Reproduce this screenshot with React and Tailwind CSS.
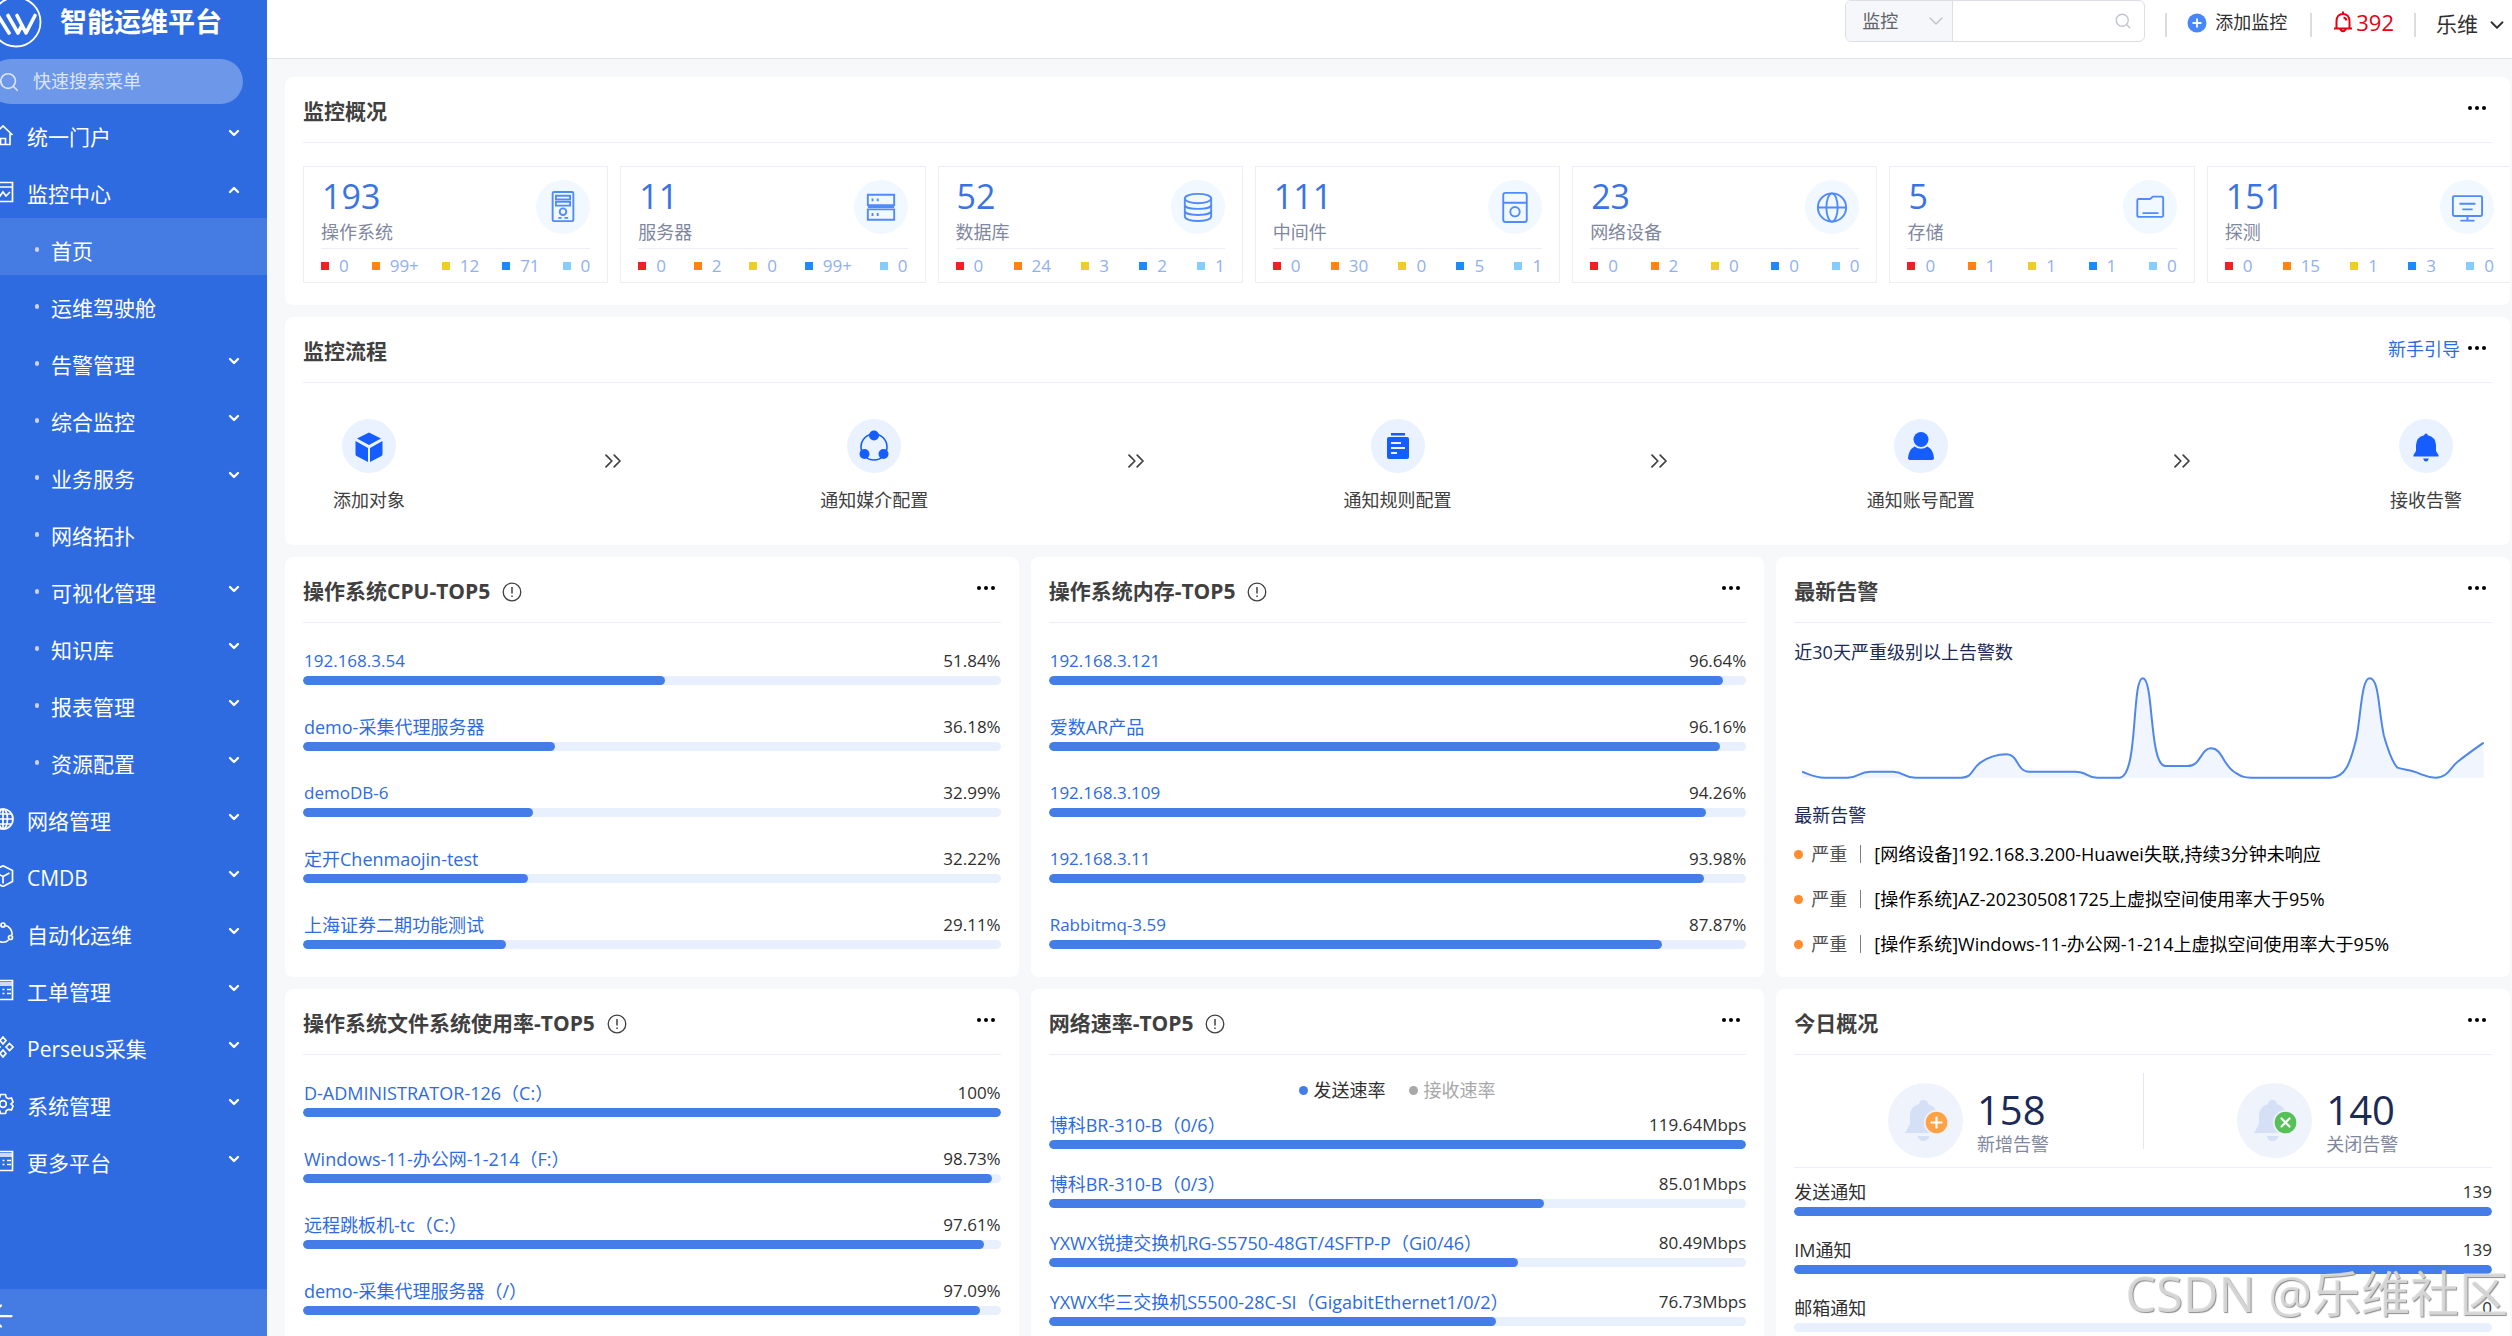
import { useState } from "react";
import { ChevronDown, ChevronUp, ChevronsRight, ArrowLeft, Search } from "lucide-react";

const MENU = [
  { label: "统一门户", icon: "home" },
  {
    label: "监控中心",
    icon: "monitor",
    children: [
      { label: "首页" },
      { label: "运维驾驶舱" },
      { label: "告警管理", more: true },
      { label: "综合监控", more: true },
      { label: "业务服务", more: true },
      { label: "网络拓扑" },
      { label: "可视化管理", more: true },
      { label: "知识库", more: true },
      { label: "报表管理", more: true },
      { label: "资源配置", more: true },
    ],
  },
  { label: "网络管理", icon: "globe" },
  { label: "CMDB", icon: "cube" },
  { label: "自动化运维", icon: "cycle" },
  { label: "工单管理", icon: "list" },
  { label: "Perseus采集", icon: "diamonds" },
  { label: "系统管理", icon: "gear" },
  { label: "更多平台", icon: "list" },
];

const STATS = [
  { value: 193, label: "操作系统", icon: "tower", levels: ["0", "99+", "12", "71", "0"] },
  { value: 11, label: "服务器", icon: "server", levels: ["0", "2", "0", "99+", "0"] },
  { value: 52, label: "数据库", icon: "database", levels: ["0", "24", "3", "2", "1"] },
  { value: 111, label: "中间件", icon: "middleware", levels: ["0", "30", "0", "5", "1"] },
  { value: 23, label: "网络设备", icon: "network", levels: ["0", "2", "0", "0", "0"] },
  { value: 5, label: "存储", icon: "folder", levels: ["0", "1", "1", "1", "0"] },
  { value: 151, label: "探测", icon: "probe", levels: ["0", "15", "1", "3", "0"] },
];

const LEVEL_COLORS = ["bg-[#f01f24]", "bg-[#ff8412]", "bg-[#edcc2c]", "bg-[#1f8af5]", "bg-[#85cdfd]"];

const STEPS = [
  { label: "添加对象", icon: "box" },
  { label: "通知媒介配置", icon: "share" },
  { label: "通知规则配置", icon: "rules" },
  { label: "通知账号配置", icon: "user" },
  { label: "接收告警", icon: "bell" },
];

const CPU = [
  ["192.168.3.54", 51.84],
  ["demo-采集代理服务器", 36.18],
  ["demoDB-6", 32.99],
  ["定开Chenmaojin-test", 32.22],
  ["上海证券二期功能测试", 29.11],
];

const MEMORY = [
  ["192.168.3.121", 96.64],
  ["爱数AR产品", 96.16],
  ["192.168.3.109", 94.26],
  ["192.168.3.11", 93.98],
  ["Rabbitmq-3.59", 87.87],
];

const DISKS = [
  ["D-ADMINISTRATOR-126（C:）", 100],
  ["Windows-11-办公网-1-214（F:）", 98.73],
  ["远程跳板机-tc（C:）", 97.61],
  ["demo-采集代理服务器（/）", 97.09],
];

const RATES = [
  ["博科BR-310-B（0/6）", 119.64],
  ["博科BR-310-B（0/3）", 85.01],
  ["YXWX锐捷交换机RG-S5750-48GT/4SFTP-P（Gi0/46）", 80.49],
  ["YXWX华三交换机S5500-28C-SI（GigabitEthernet1/0/2）", 76.73],
];

const ALERTS = [
  "[网络设备]192.168.3.200-Huawei失联,持续3分钟未响应",
  "[操作系统]AZ-202305081725上虚拟空间使用率大于95%",
  "[操作系统]Windows-11-办公网-1-214上虚拟空间使用率大于95%",
];

const NOTICES = [
  ["发送通知", 139],
  ["IM通知", 139],
  ["邮箱通知", 0],
];

const MENU_ICONS = {
  home: <path d="M1.5 11 11 2l9.500 9M4 9.500V20.500h14V9.500M8.500 20.500v-6h5v6" />,
  monitor: <path d="M1.500 1.500h19v19h-19zM1.500 6h19M5 12l3 3 3-4 3 4 4-4" />,
  globe: (
    <>
      <circle cx="11" cy="11" r="10" />
      <ellipse cx="11" cy="11" rx="4.500" ry="10" />
      <path d="M1 11h20M2.500 6h17M2.500 16h17M11 1v20" />
    </>
  ),
  cube: <path d="M11 .8 20.500 5.500v11L11 21.500 1.500 16.500v-11zM4.500 8 11 11.500 17.500 8M11 11.500v7" />,
  cycle: (
    <>
      <circle cx="11" cy="3" r="2" />
      <circle cx="18.500" cy="15.500" r="2" />
      <circle cx="3.500" cy="15.500" r="2" />
      <path d="M13.500 3.500c4 1 7 5 6.500 9.500M16.500 18c-3 3-8 3-11 0M8.500 3.500c-4 1-7 5-6.500 9.500" />
    </>
  ),
  list: <path d="M2 1.500h18.500v19H2zM2 4h18M2 6h18M6 10.500h2M6 14.500h2M10.500 10.500h2M10.500 14.500h2M15 10.500h4M15 14.500h4" />,
  diamonds: <path d="m11 1 3 3.500-3 3.500-3-3.500zM11 14l3 3.500-3 3.500-3-3.500zM4.500 7.500l3.500 3.500-3.500 3.500L1 11zM17.500 7.500 21 11l-3.500 3.500L14 11z" />,
  gear: (
    <>
      <circle cx="11" cy="11" r="3.300" />
      <path d="M8.500 1.500h5l.8 3 2.200 1.200 3-.7 1.500 4-2 2 2 2-1.500 4-3-.7-2.200 1.200-.8 3h-5l-.8-3-2.200-1.200-3 .7-1.500-4 2-2-2-2 1.500-4 3 .7 2.200-1.200z" />
    </>
  ),
};

const STAT_ICONS = {
  tower: (
    <>
      <rect x="6" y="1" width="22" height="31" rx="1.500" />
      <path d="M9.500 5h15v4h-15zM9.500 11.500h15v4h-15zM12 28.500h3.500M18.500 28.500h4" />
      <circle cx="17" cy="22" r="3.500" />
    </>
  ),
  server: <path d="M3 4h28v11H3zM3 19.500h28v11H3zM8 8v3M13.500 8v3M8 23.500v3M13.500 23.500v3M3 17h28" />,
  database: (
    <>
      <ellipse cx="17" cy="8" rx="14" ry="5" />
      <path d="M3 8v19c0 6.500 28 6.500 28 0V8M3 14.500c0 6 28 6 28 0M3 21c0 6 28 6 28 0" />
    </>
  ),
  middleware: (
    <>
      <rect x="4.500" y="2" width="25" height="31" rx="2.500" />
      <path d="M4.500 12.500h25" />
      <circle cx="17" cy="22" r="5" />
    </>
  ),
  network: (
    <>
      <circle cx="17" cy="17.500" r="15" />
      <ellipse cx="17" cy="17.500" rx="6" ry="15" />
      <path d="M2 17.500h30" />
    </>
  ),
  folder: <path d="M3.500 10q0-1.500 1.500-1.500h12L20 6h9.500q1.500 0 1.500 1.500v18.500q0 1.500-1.500 1.500h-24q-2 0-2-1.500zM9 23.500h17" />,
  probe: (
    <>
      <rect x="2" y="5.500" width="31" height="21" rx="1.500" />
      <path d="M9 13.500h17M12 19.500h11M17.500 26.500v5M10 31.500h15" />
    </>
  ),
};

const STEP_ICONS = {
  box: <path d="M16 2.500 28 8.500 16 15 4 8.500zM2.500 11 15 18v14L3.500 26q-1-.5-1-2zM29.500 11 17 18v14l11.500-6q1-.5 1-2z" />,
  share: (
    <>
      <circle cx="16" cy="5.500" r="5" />
      <circle cx="6.500" cy="24" r="5" />
      <circle cx="25.500" cy="24" r="5" />
      <circle cx="16" cy="17" r="13" fill="none" stroke="currentColor" strokeWidth="1.600" />
    </>
  ),
  rules: (
    <>
      <rect x="9" y="3" width="14" height="2.500" />
      <rect x="5" y="7" width="22" height="22" rx="2" />
      <path d="M9 13h10M9 18h14M9 23h6" stroke="#eaf2ff" strokeWidth="2" />
    </>
  ),
  user: (
    <>
      <circle cx="16" cy="9.500" r="7.500" />
      <path d="M9.500 16.500q6.500 4.500 13 0Q28.500 20 29 28q0 2-3 2H6q-3 0-3-2 .5-8 6.500-11.500z" />
    </>
  ),
  bell: <path d="M16 3.500q1.500 0 1.800 1.800Q25.500 7 26 15v6l2.500 4v1.500h-25V25L6 21v-6q.5-8 8.200-9.700Q14.500 3.500 16 3.500zM13 28.500h6q-1 3-3 3t-3-3z" />,
};

const Dots = () => (
  <button aria-label="更多" className="flex h-5 cursor-pointer items-center gap-[3px] text-black">
    <span className="size-1 rounded-full bg-current" />
    <span className="size-1 rounded-full bg-current" />
    <span className="size-1 rounded-full bg-current" />
  </button>
);

const Card = ({ title, info, extra, className = "", children }) => (
  <section className={`overflow-hidden rounded-lg bg-white px-[18px] ${className}`}>
    <header className="flex h-[66px] items-center justify-between border-b border-[#ebedf7] pr-1.5">
      <h2 className="flex items-center pt-1 text-[21px] font-bold text-[#404040]">
        {title}
        {info && (
          <svg viewBox="0 0 20 20" className="ml-3 size-5" fill="none" stroke="currentColor">
            <circle cx="10" cy="10" r="8.800" strokeWidth="1.300" />
            <path d="M10 5v6.500M10 13.500V15" strokeWidth="1.500" />
          </svg>
        )}
      </h2>
      <div className="flex items-center gap-2 pb-1">
        {extra}
        <Dots />
      </div>
    </header>
    {children}
  </section>
);

// plain latin names look too wide next to the mixed ones at the same size
const nameSize = (name) => (/[^\x00-\x7f]/.test(name) ? "text-[18px]" : "text-[17px]");

const BarRow = ({ name, value, percent, link = true }) => (
  <li className="flex flex-col gap-[3px]">
    <div className="flex h-6 items-center justify-between text-[17px] whitespace-nowrap text-[#303030]">
      {link ? (
        <a href="#" className={`h-6 overflow-hidden pl-px leading-6 text-[#2e6be0] ${nameSize(name)}`}>
          {name}
        </a>
      ) : (
        <span className="text-[18px]">{name}</span>
      )}
      <span>{value}</span>
    </div>
    <div className="h-[9px] overflow-hidden rounded-full bg-[#e9f0fd]">
      <div className="h-full rounded-full bg-[#447de8]" style={{ width: `${percent}%` }} />
    </div>
  </li>
);

const TopCard = ({ title, rows }) => (
  <Card title={title} info className="h-[420px]">
    <ul className="flex flex-col gap-[30px] pt-[26px]">
      {rows.map(([name, value]) => (
        <BarRow key={name} name={name} value={`${value}%`} percent={value} />
      ))}
    </ul>
  </Card>
);

const Sidebar = () => {
  const [active, setActive] = useState("首页");

  return (
    <aside className="flex w-[267px] shrink-0 flex-col overflow-hidden bg-[#2e6be0] text-white">
      <div className="flex h-[59px] items-start gap-[18px]">
        <svg viewBox="0 0 52 52" className="-mt-1 -ml-2.5 size-[52px] shrink-0" fill="none" stroke="currentColor">
          <circle cx="26" cy="26" r="24.500" strokeWidth="1.800" />
          <path
            d="M8 19.500 19 37M18 19.500 28 37l3-6M27 19.500 36 37l9-17.500"
            strokeWidth="3.600"
            strokeLinecap="round"
            strokeLinejoin="round"
          />
        </svg>
        <h1 className="text-[27px] leading-[44px] font-bold">智能运维平台</h1>
      </div>

      <label className="mr-6 -ml-3 flex h-[45px] shrink-0 items-center rounded-full bg-white/30 pl-3 text-[#dbe6fb]">
        <Search className="-ml-0.5 size-[22px]" strokeWidth={1.8} />
        <input
          aria-label="快速搜索菜单"
          placeholder="快速搜索菜单"
          className="ml-[13px] w-0 grow bg-transparent text-[18px] outline-none placeholder:text-[#dbe6fb]"
        />
      </label>

      <nav className="grow">
        <ul>
          {MENU.map((item) => (
            <li key={item.label}>
              <button className="flex h-[57px] w-full cursor-pointer items-center pr-[25px]">
                <svg
                  viewBox="0 0 22 22"
                  className="mt-1 -ml-2 size-[22px] shrink-0"
                  fill="none"
                  stroke="currentColor"
                  strokeWidth="1.700"
                >
                  {MENU_ICONS[item.icon]}
                </svg>
                <span className="grow pt-2.5 pl-[13px] text-left text-[21px]">{item.label}</span>
                {item.children ? (
                  <ChevronUp className="size-4" strokeWidth={3.5} />
                ) : (
                  <ChevronDown className="size-4" strokeWidth={3.5} />
                )}
              </button>
              {item.children && (
                <ul>
                  {item.children.map((child) => (
                    <li key={child.label}>
                      <button
                        onClick={() => setActive(child.label)}
                        className={`flex h-[57px] w-full cursor-pointer items-center pr-[25px] pl-[35px] ${
                          active === child.label ? "bg-[#447ce4]" : ""
                        }`}
                      >
                        <span className="mt-1.5 h-[5px] w-1 rounded-full bg-[#cdd3e2]" />
                        <span className="grow pt-2.5 pl-3 text-left text-[21px]">{child.label}</span>
                        {child.more && <ChevronDown className="size-4" strokeWidth={3.5} />}
                      </button>
                    </li>
                  ))}
                </ul>
              )}
            </li>
          ))}
        </ul>
      </nav>

      <button aria-label="收起菜单" className="flex h-[47px] shrink-0 cursor-pointer items-center bg-[#447ce4] pt-1.5">
        <ArrowLeft className="-ml-[17px] size-9" strokeWidth={1.5} />
      </button>
    </aside>
  );
};

const Divider = () => <span className="h-6 w-0.5 bg-[#dcdcdc]" />;

const TopBar = () => (
  <header className="flex h-[59px] shrink-0 items-start justify-end border-b border-[#e3e5e9] bg-white pr-1 text-[18px] text-[#303030]">
    <div className="flex h-[42px] w-[300px] overflow-hidden rounded-md border border-[#dcdfe6]">
      <div className="relative w-[107px] border-r border-[#dcdfe6] bg-[#f5f7fa]">
        <select aria-label="搜索范围" className="h-full w-full appearance-none pl-4 text-[18px] text-[#606266] outline-none">
          <option>监控</option>
        </select>
        <ChevronDown className="pointer-events-none absolute top-2 right-1 size-6 text-[#c0c4cc]" strokeWidth={1.5} />
      </div>
      <label className="flex grow items-center pr-3">
        <input aria-label="搜索关键字" className="w-0 grow px-3 outline-none" />
        <Search className="size-[18px] text-[#c0c4cc]" strokeWidth={1.8} />
      </label>
    </div>
    <div className="ml-5 flex h-[49px] items-center">
      <Divider />
      <button className="ml-5 flex cursor-pointer items-center gap-2 pb-1">
        <svg viewBox="0 0 20 20" className="size-5">
          <circle cx="10" cy="10" r="9.500" fill="#4787fb" />
          <path d="M10 5.500v9M5.500 10h9" stroke="#fff" strokeWidth="1.800" />
        </svg>
        添加监控
      </button>
      <span className="w-[23px]" />
      <Divider />
      <button className="mx-5 flex cursor-pointer items-center gap-0.5 pb-1 text-[22px] text-[#e60012]">
        <svg viewBox="0 0 20 22" className="mb-0.5 size-[22px]" fill="none" stroke="currentColor" strokeWidth="2">
          <path d="M1 17.500h18M3.500 17V10c0-4 2.500-7 6.500-7s6.500 3 6.500 7v7M10 .5V3M7 18q3 4.500 6 0M10.500 6.500q2.500.5 3 3" />
        </svg>
        392
      </button>
      <Divider />
      <button className="ml-5 flex cursor-pointer items-center gap-2 text-[21px]">
        乐维
        <ChevronDown className="size-[22px]" strokeWidth={2} />
      </button>
    </div>
  </header>
);

const StatCard = ({ value, label, icon, levels }) => (
  <div className="h-[117px] flex-1 border border-[#ebedf7] px-[17px]">
    <div className="flex h-[82px] items-start justify-between border-b border-[#ebedf7] pt-[13px]">
      <div>
        <p className="pl-px text-[34px] leading-8 text-[#3a74e4]">{value}</p>
        <p className="pt-2 text-[18px] leading-6 text-[#8087a0]">{label}</p>
      </div>
      <span className="flex size-[54px] items-center justify-center rounded-full bg-[#f2f8ff] text-[#4f8aff]">
        <svg viewBox="0 0 34 34" className="size-8" fill="none" stroke="currentColor" strokeWidth="2">
          {STAT_ICONS[icon]}
        </svg>
      </span>
    </div>
    <ul className="flex h-[33px] items-center justify-between text-[17px] text-[#8fb0f2]">
      {levels.map((count, i) => (
        <li key={i} className="flex items-center gap-2.5">
          <span className={`size-2 ${LEVEL_COLORS[i]}`} />
          {count}
        </li>
      ))}
    </ul>
  </div>
);

const AlertCount = ({ value, label, color, mark }) => (
  <div className="flex flex-1 items-center justify-center gap-3.5 pt-[18px]">
    <svg viewBox="0 0 75 75" className="size-[75px]">
      <circle cx="37.500" cy="37.500" r="37.500" fill="#eff3fb" />
      <path
        d="M35.500 17q4 0 4.500 4Q49 23.500 49 33v8l4 9H17l5-9v-8q0-9.500 9-12 .5-4 4.500-4zM29.500 53h12q-1.500 5-6 5t-6-5z"
        fill="#d5e0f6"
      />
      <circle cx="48.500" cy="39.500" r="12.500" fill="#eff3fb" />
      <circle cx="48.500" cy="39.500" r="10.800" fill={color} />
      <path d={mark} stroke="#fff" strokeWidth="2.200" strokeLinecap="round" />
    </svg>
    <div className="pt-1">
      <p className="text-[40px] leading-[44px] text-[#1b2a56]">{value}</p>
      <p className="text-[18px] leading-6 text-[#8087a0]">{label}</p>
    </div>
  </div>
);

const CURVE =
  "M88 667C105 676 115 685 135 685H183C207 685 207 667 230 667H278C300 667 300 685 325 685H420C445 685 440 660 460 640C480 620 495 615 515 615C540 615 535 667 562 667H657C685 667 680 685 704 685H750C790 685 775 387 799 387C822 387 812 650 846 650H893C920 650 920 597 941 597C965 597 965 645 990 668C1005 681 1008 685 1025 685H1190C1222 685 1232 640 1244 570C1254 500 1255 387 1272 387C1292 387 1290 480 1302 560C1312 610 1320 640 1330 655C1345 662 1360 662 1375 672C1390 680 1395 685 1410 685C1435 685 1440 655 1455 638C1475 615 1490 600 1510 580";

const TrendChart = () => (
  <svg viewBox="88 383 1422 306" preserveAspectRatio="none" className="h-[102px] w-full">
    <path d={`${CURVE}V685H88Z`} fill="#f0f5fe" />
    <path d={CURVE} fill="none" stroke="#5087ea" strokeWidth="2" vectorEffect="non-scaling-stroke" />
  </svg>
);

export default function App() {
  return (
    <div className="relative flex h-screen overflow-hidden bg-[#f7f8fa] font-['Open_Sans','Noto_Sans_CJK_SC',sans-serif]">
      <Sidebar />
      <div className="flex min-w-0 grow flex-col">
        <TopBar />
        <main className="flex min-h-0 grow flex-col gap-3 overflow-hidden pt-[18px] pr-0.5 pl-[18px]">
          <Card title="监控概况" className="shrink-0">
            <div className="-mr-5 flex gap-3 pt-[23px] pb-[22px]">
              {STATS.map((stat) => (
                <StatCard key={stat.label} {...stat} />
              ))}
            </div>
          </Card>

          <Card
            title="监控流程"
            className="shrink-0"
            extra={
              <a href="#" className="pt-1 text-[18px] text-[#2e6be0]">
                新手引导
              </a>
            }
          >
            <ol className="flex items-start justify-between px-[30px] pt-9 pb-[31px]">
              {STEPS.map((step, i) => (
                <li key={step.label} className="contents">
                  {i > 0 && <ChevronsRight className="-mx-1.5 mt-7 size-7 text-[#404040]" strokeWidth={1.5} />}
                  <div className="flex flex-col items-center gap-[13px] text-[18px] text-[#404040]">
                    <span className="flex size-[54px] items-center justify-center rounded-full bg-[#eaf2ff] text-[#165dff]">
                      <svg viewBox="0 0 32 32" className="size-8" fill="currentColor">
                        {STEP_ICONS[step.icon]}
                      </svg>
                    </span>
                    <span className="leading-7">{step.label}</span>
                  </div>
                </li>
              ))}
            </ol>
          </Card>

          <div className="grid shrink-0 grid-cols-3 gap-3">
            <TopCard title="操作系统CPU-TOP5" rows={CPU} />
            <TopCard title="操作系统内存-TOP5" rows={MEMORY} />

            <Card title="最新告警" className="h-[420px]">
              <h3 className="pt-[17px] text-[18px] leading-6 text-[#1b2a56]">近30天严重级别以上告警数</h3>
              <div className="px-2 pt-[13px]">
                <TrendChart />
              </div>
              <h3 className="pt-6 text-[18px] leading-6 text-[#1b2a56]">最新告警</h3>
              <ul className="flex flex-col gap-[21px] pt-[15px] text-[18px]">
                {ALERTS.map((text) => (
                  <li key={text} className="flex h-6 items-center whitespace-nowrap">
                    <span className="size-[9px] rounded-full bg-[#ff8c2e]" />
                    <span className="pl-2 text-[#505050]">严重</span>
                    <span className="mx-[13px] h-[18px] w-px bg-[#808080]" />
                    <a href="#" className="text-black">
                      {text}
                    </a>
                  </li>
                ))}
              </ul>
            </Card>

            <TopCard title="操作系统文件系统使用率-TOP5" rows={DISKS} />

            <Card title="网络速率-TOP5" info className="h-[420px]">
              <div className="mt-[23px] mb-[11px] flex h-6 justify-center gap-6 text-[18px]">
                <button className="flex cursor-pointer items-center gap-[5px] text-[#303030]">
                  <span className="size-[9px] rounded-full bg-[#447de8]" />
                  发送速率
                </button>
                <button className="flex cursor-pointer items-center gap-[5px] text-[#a8a8a8]">
                  <span className="size-[9px] rounded-full bg-[#a8a8a8]" />
                  接收速率
                </button>
              </div>
              <ul className="flex flex-col gap-[23px]">
                {RATES.map(([name, rate]) => (
                  <BarRow key={name} name={name} value={`${rate}Mbps`} percent={(rate / RATES[0][1]) * 100} />
                ))}
              </ul>
            </Card>

            <Card title="今日概况" className="h-[420px]">
              <div className="flex h-[113px] items-center border-b border-[#ebedf7]">
                <AlertCount value={158} label="新增告警" color="#ffa245" mark="M48.500 34.500v10M43.500 39.500h10" />
                <span className="h-[76px] w-px bg-[#e4e8f2]" />
                <AlertCount value={140} label="关闭告警" color="#57c058" mark="m44.500 35.500 8 8M52.500 35.500l-8 8" />
              </div>
              <ul className="flex flex-col gap-[22px] pt-3">
                {NOTICES.map(([name, count]) => (
                  <BarRow key={name} name={name} value={count} percent={(count / 139) * 100} link={false} />
                ))}
              </ul>
            </Card>
          </div>
        </main>
      </div>

      <p className="pointer-events-none absolute right-1 bottom-2 text-[49px] leading-[70px] text-[#dcdcdc]/90 [text-shadow:1px_1px_1px_#8c8c8c]">
        CSDN @乐维社区
      </p>
    </div>
  );
}
